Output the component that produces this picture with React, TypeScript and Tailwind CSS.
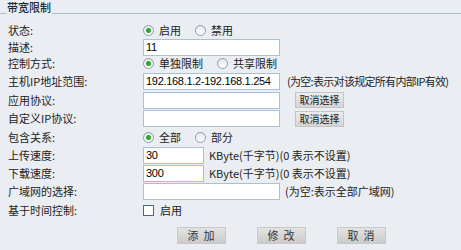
const font = { fontFamily: '"Noto Sans CJK SC", "Liberation Sans", sans-serif' }

function Radio({ checked, label }: { checked?: boolean; label: string }) {
  return (
    <span className="flex items-center">
      <span className="flex h-[11px] w-[11px] items-center justify-center rounded-full border border-[#8c9cab] bg-gradient-to-b from-[#e4e8ec] to-white">
        {checked && <span className="h-[5px] w-[5px] rounded-full bg-[#2fa52f]" />}
      </span>
      <span className="ml-[5px]">{label}</span>
    </span>
  )
}

function Field({ value = '', w = 'w-[137px]', focus }: { value?: string; w?: string; focus?: boolean }) {
  return (
    <div
      className={`flex h-[17px] shrink-0 items-center overflow-hidden whitespace-nowrap border bg-white pl-[2px] text-[11px] text-black ${w} ${
        focus ? 'border-[#e2b45e]' : 'border-[#a8c0d8]'
      }`}
      style={{ fontFamily: '"Liberation Sans", sans-serif', letterSpacing: '-0.3px' }}
    >
      {value}
    </div>
  )
}

function SmallButton({ text }: { text: string }) {
  return (
    <div className="ml-[15px] flex h-[16px] w-[49px] shrink-0 items-center justify-center border border-[#c4c4c4] bg-gradient-to-b from-[#ececec] to-[#d4d4d4] text-[10px] text-[#222]">
      {text}
    </div>
  )
}

function BigButton({ text }: { text: string }) {
  return (
    <div className="flex h-[17px] w-[49px] items-center justify-center border border-[#c8c8c8] bg-gradient-to-b from-[#e2e2e2] to-[#cbcbcb] pl-[4px] text-[11px] tracking-[5px] text-[#333]">
      {text}
    </div>
  )
}

function Row({ h, label, children }: { h: string; label: string; children?: React.ReactNode }) {
  return (
    <div className={`flex items-center whitespace-nowrap ${h}`}>
      <div className="w-[143px] shrink-0 pl-[8px]">{label}</div>
      <div className="flex items-center">{children}</div>
    </div>
  )
}

export default function App() {
  return (
    <div className="h-[250px] w-[461px] overflow-hidden bg-[#eaeef2] text-[11px] leading-none text-[#222]" style={font}>
      <div className="flex h-[14px] items-end">
        <span className="w-[6px] border-b border-[#a9bdd0]" />
        <span className="mb-[1px] px-[1px] leading-[12px] font-medium text-[#1c2a3a]">带宽限制</span>
        <span className="flex-1 border-b border-[#a9bdd0]" />
      </div>

      <div className="pt-[8px]">
        <Row h="h-[17px]" label="状态:">
          <Radio checked label="启用" />
          <span className="ml-[14px]">
            <Radio label="禁用" />
          </span>
        </Row>
        <Row h="h-[16px]" label="描述:">
          <Field value="11" />
        </Row>
        <Row h="h-[17px]" label="控制方式:">
          <Radio checked label="单独限制" />
          <span className="ml-[14px]">
            <Radio label="共享限制" />
          </span>
        </Row>
        <Row h="h-[19px]" label="主机IP地址范围:">
          <Field value="192.168.1.2-192.168.1.254" />
          <span className="ml-[7px] tracking-[-0.7px]">(为空:表示对该规定所有内部IP有效)</span>
        </Row>
        <Row h="h-[18px]" label="应用协议:">
          <Field />
          <SmallButton text="取消选择" />
        </Row>
        <Row h="h-[19px]" label="自定义IP协议:">
          <Field />
          <SmallButton text="取消选择" />
        </Row>
        <Row h="h-[18px]" label="包含关系:">
          <Radio checked label="全部" />
          <span className="ml-[14px]">
            <Radio label="部分" />
          </span>
        </Row>
        <Row h="h-[19px]" label="上传速度:">
          <Field value="30" w="w-[61px]" />
          <span className="ml-[5px]">KByte(千字节)(0 表示不设置)</span>
        </Row>
        <Row h="h-[17px]" label="下载速度:">
          <Field value="300" w="w-[61px]" focus />
          <span className="ml-[5px]">KByte(千字节)(0 表示不设置)</span>
        </Row>
        <Row h="h-[19px]" label="广域网的选择:">
          <Field />
          <span className="ml-[5px]">(为空:表示全部广域网)</span>
        </Row>
        <Row h="h-[19px]" label="基于时间控制:">
          <span className="h-[11px] w-[11px] border border-[#3d6a9a] bg-white" />
          <span className="ml-[6px]">启用</span>
        </Row>
      </div>

      <div className="mt-[7px] flex gap-[31px] pl-[177px]">
        <BigButton text="添加" />
        <BigButton text="修改" />
        <BigButton text="取消" />
      </div>
    </div>
  )
}
